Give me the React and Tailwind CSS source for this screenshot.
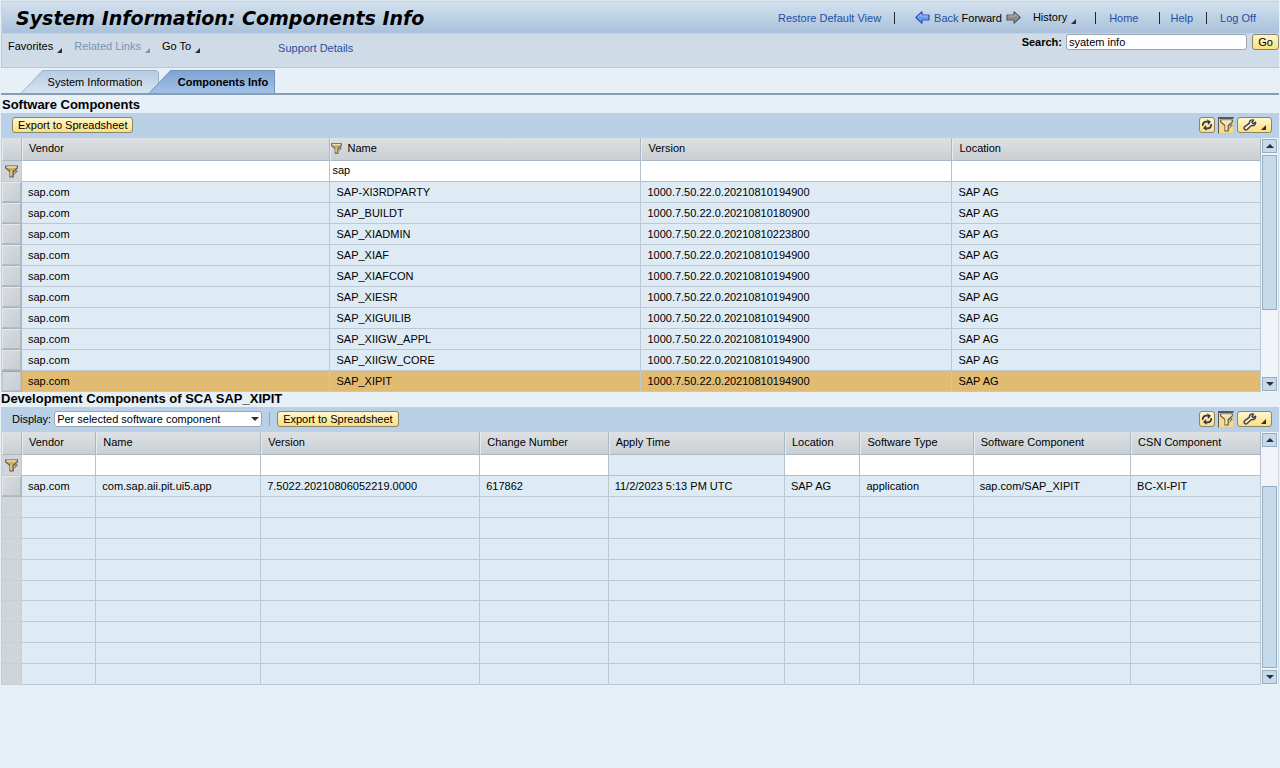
const SOFTWARE = [
  ["SAP-XI3RDPARTY", "1000.7.50.22.0.20210810194900"],
  ["SAP_BUILDT", "1000.7.50.22.0.20210810180900"],
  ["SAP_XIADMIN", "1000.7.50.22.0.20210810223800"],
  ["SAP_XIAF", "1000.7.50.22.0.20210810194900"],
  ["SAP_XIAFCON", "1000.7.50.22.0.20210810194900"],
  ["SAP_XIESR", "1000.7.50.22.0.20210810194900"],
  ["SAP_XIGUILIB", "1000.7.50.22.0.20210810194900"],
  ["SAP_XIIGW_APPL", "1000.7.50.22.0.20210810194900"],
  ["SAP_XIIGW_CORE", "1000.7.50.22.0.20210810194900"],
  ["SAP_XIPIT", "1000.7.50.22.0.20210810194900"],
];

const DEV_COLUMNS = ["Vendor", "Name", "Version", "Change Number", "Apply Time", "Location", "Software Type", "Software Component", "CSN Component"];
const DEV_ROW = ["sap.com", "com.sap.aii.pit.ui5.app", "7.5022.20210806052219.0000", "617862", "11/2/2023 5:13 PM UTC", "SAP AG", "application", "sap.com/SAP_XIPIT", "BC-XI-PIT"];
const BLANK_ROWS = [0, 1, 2, 3, 4, 5, 6, 7, 8];

const linkStyle = "text-[#1f4fa5]";
const yellow = "rounded-[3px] border border-[#8a856f] bg-linear-to-b from-[#fff6cf] to-[#fbe07a]";
const headCell = "border-r border-b border-[#aab8c6] border-l border-l-[#e8ecef] px-[6px] pb-[2px] text-left font-normal";
const bodyCell = "border-r border-b border-[#bcc9d4] pl-[6px] text-left";
const filterCell = "border-r border-b border-[#b3c1cd] bg-white p-0";
const filterInput = "block h-[20px] w-full px-[2px] pb-[2px] outline-none disabled:bg-[#deebf5]";
const toolbar = "flex h-[25px] items-center bg-[#b9d0e7] pb-[1px] pl-[11px]";

function Corner({ className = "text-[#2c2c44]" }) {
  return (
    <svg viewBox="0 0 5 5" className={`h-[5px] w-[5px] ${className}`} aria-hidden="true">
      <path d="M5 0V5H0Z" fill="currentColor" />
    </svg>
  );
}

function Arrow({ flip, fill, edge, light }) {
  return (
    <svg viewBox="0 0 15 13" className={`h-[13px] w-[15px] ${flip ? "-scale-x-100" : ""}`} aria-hidden="true">
      <path d="M.8 6.5 7 .8V4H14V9H7v3.2Z" fill={fill} stroke={edge} strokeWidth="1.2" strokeLinejoin="round" />
      <path d="M2.800 6 6 3V5H13" fill="none" stroke={light} strokeWidth=".7" />
    </svg>
  );
}

function Funnel({ small, pale }) {
  return (
    <svg viewBox="0 0 13 13" className={small ? "h-[11px] w-[11px]" : "h-[13px] w-[13px]"} aria-hidden="true">
      <path d="M.7 1H12.300V3L8.200 6.500V12H5V6.500L.7 3Z" fill={pale ? "#f5e3b4" : "#d3ab48"} stroke="#5c5a58" strokeWidth="1.200" />
      <path d="M1.500 2H11.500" stroke="#f0eee6" strokeWidth="1.200" />
      <path d="M5.900 6V11.200" stroke="#fbe9b0" />
      <path d="M9 6.500 11.800 5.500 9.500 9.500M11.800 5.500V7.500" fill="none" stroke="#7a705c" />
    </svg>
  );
}

function Refresh() {
  return (
    <svg viewBox="0 0 12 12" className="h-[12px] w-[12px]" aria-hidden="true">
      <path d="M1.800 6.800C1.400 4 3.500 2.200 6.500 2.800M10.200 5.200C10.600 8 8.500 9.800 5.500 9.200" fill="none" stroke="#35364e" strokeWidth="1.800" />
      <path d="M6 .3 10 2.800 7 6ZM6 11.700 2 9.200 5 6Z" fill="#35364e" />
    </svg>
  );
}

function Wrench() {
  return (
    <svg viewBox="0 0 14 12" className="h-[12px] w-[14px]" aria-hidden="true">
      <path d="M12.500 3.200 10.200 4.700 8.900 3.300 10.600 1.100C8.200.3 6.200 1.700 6.500 4.100L1.500 7.900C.3 9.600 2 11.700 4 10.600L8.500 6.500C11 7 13 5.500 12.500 3.200Z" fill="#fbf3d0" stroke="#3d3f50" strokeWidth="1.400" strokeLinejoin="round" />
    </svg>
  );
}

function TableTools() {
  return (
    <div className="ml-auto flex items-center gap-[3px] pr-[7px]">
      <button aria-label="Refresh" className={`flex h-[16px] w-[16px] items-center justify-center ${yellow}`}><Refresh /></button>
      <button aria-label="Filter" aria-pressed="true" className="flex h-[17px] w-[16px] items-center justify-center border-t-2 border-l border-r border-b border-[#5d574c] border-r-[#e8c873] border-b-[#e8c873] bg-[#fbd98c]"><Funnel pale /></button>
      <button aria-label="Settings" className={`flex h-[16px] w-[35px] items-center justify-end gap-[4px] pr-[5px] ${yellow}`}>
        <Wrench />
        <span className="self-end pb-[2px]"><Corner /></span>
      </button>
    </div>
  );
}

function ExportButton() {
  return <button className={`h-[16px] px-[5px] leading-[14px] ${yellow}`}>Export to Spreadsheet</button>;
}

function ScrollBar({ before, after, thumb }) {
  const arrow = "flex h-[14px] w-[15px] shrink-0 items-center justify-center border border-[#96acbf] bg-[#c5daeb]";
  return (
    <div className="flex w-[18px] shrink-0 flex-col items-center border-r border-[#cfdae4] bg-[#f0f4f8] py-[1px]">
      <button aria-label="Scroll up" className={arrow}>
        <svg viewBox="0 0 8 4" className="h-[4px] w-[8px]"><path d="M0 4 4 0 8 4Z" fill="#2c2c44" /></svg>
      </button>
      <div className={before} />
      <div className={`w-[15px] border border-[#96acbf] bg-[#c5daeb] ${thumb}`} />
      <div className={after} />
      <button aria-label="Scroll down" className={arrow}>
        <svg viewBox="0 0 8 4" className="h-[4px] w-[8px]"><path d="M0 0 4 4 8 0Z" fill="#2c2c44" /></svg>
      </button>
    </div>
  );
}

function Selector({ selected }) {
  return (
    <td className="border-r border-b border-[#a9b4bf] bg-[#d0d5da] p-0">
      <button aria-label="Select row" className={`block h-[20px] w-full border ${selected ? "border-[#bcc4cb] border-t-[#9aa5b0]" : "border-[#e4e8eb] border-r-[#b4bcc4] border-b-[#b4bcc4]"} bg-linear-to-br from-[#d8dce0] to-[#c8cdd2]`} />
    </td>
  );
}

function FilterMark() {
  return (
    <td className="border-r border-b border-[#c3ccd4] bg-[#d0d5da] p-0">
      <button aria-label="Apply filter" className="flex w-full items-center justify-center"><Funnel /></button>
    </td>
  );
}

function Divider() {
  return <span className="h-[12px] w-px bg-[#1c2733]" />;
}

function SoftwareTable() {
  return (
    <div className="flex border-l border-[#c3d0dc]">
      <table className="min-w-0 flex-1 table-fixed border-separate border-spacing-0">
        <colgroup>
          <col className="w-[20px]" />
          <col className="w-[24.5%]" />
          <col className="w-[24.7%]" />
          <col className="w-[24.7%]" />
          <col />
        </colgroup>
        <thead>
          <tr className="h-[23px] bg-linear-to-b from-[#dde1e4] to-[#c9ced2]">
            <th aria-label="Selection" className={headCell} />
            <th className={headCell}>Vendor</th>
            <th className="border-r border-b border-[#aab8c6] border-l border-l-[#e8ecef] pb-[2px] text-left font-normal">
              <span className="flex items-center gap-[5px]"><Funnel small />Name</span>
            </th>
            <th className={headCell}>Version</th>
            <th className={headCell}>Location</th>
          </tr>
        </thead>
        <tbody>
          <tr className="h-[21px]">
            <FilterMark />
            {["Vendor", "Name", "Version", "Location"].map((name) => (
              <td key={name} className={filterCell}>
                <input aria-label={`Filter ${name}`} defaultValue={name === "Name" ? "sap" : ""} className={filterInput} />
              </td>
            ))}
          </tr>
          {SOFTWARE.map(([name, version], i) => {
            const selected = i === SOFTWARE.length - 1;
            return (
              <tr key={name} className={`h-[21px] ${selected ? "bg-[#e1bb72]" : "bg-[#deebf5]"}`}>
                <Selector selected={selected} />
                <td className={bodyCell}>sap.com</td>
                <td className={bodyCell}>{name}</td>
                <td className={bodyCell}>{version}</td>
                <td className={bodyCell}>SAP AG</td>
              </tr>
            );
          })}
        </tbody>
      </table>
      <ScrollBar before="h-[2px]" thumb="h-[155px]" after="flex-1" />
    </div>
  );
}

function DevelopmentTable() {
  return (
    <div className="flex border-l border-[#c3d0dc]">
      <table className="h-[253px] min-w-0 flex-1 table-fixed border-separate border-spacing-0">
        <colgroup>
          <col className="w-[20px]" />
          <col className="w-[5.9%]" />
          <col className="w-[13.1%]" />
          <col className="w-[17.4%]" />
          <col className="w-[10.2%]" />
          <col className="w-[14%]" />
          <col className="w-[6%]" />
          <col className="w-[9%]" />
          <col className="w-[12.5%]" />
          <col />
        </colgroup>
        <thead>
          <tr className="h-[23px] bg-linear-to-b from-[#dde1e4] to-[#c9ced2]">
            <th aria-label="Selection" className={headCell} />
            {DEV_COLUMNS.map((name) => <th key={name} className={`${headCell} whitespace-nowrap`}>{name}</th>)}
          </tr>
        </thead>
        <tbody>
          <tr className="h-[21px]">
            <FilterMark />
            {DEV_COLUMNS.map((name) => (
              <td key={name} className={filterCell}>
                <input aria-label={`Filter ${name}`} disabled={name === "Apply Time"} className={filterInput} />
              </td>
            ))}
          </tr>
          <tr className="h-[21px] bg-[#deebf5]">
            <Selector />
            {DEV_ROW.map((value) => <td key={value} className={`${bodyCell} whitespace-nowrap`}>{value}</td>)}
          </tr>
          {BLANK_ROWS.map((row) => (
            <tr key={row} className="bg-[#deebf5]">
              <td className="border-r border-b border-[#c8ced4] bg-[#d0d5da]" />
              {DEV_COLUMNS.map((name) => <td key={name} className={bodyCell} />)}
            </tr>
          ))}
        </tbody>
      </table>
      <ScrollBar before="h-[39px]" thumb="flex-1" after="h-[2px]" />
    </div>
  );
}

function Menu({ label, muted }) {
  return (
    <button className={`flex items-end gap-[4px] ${muted ? "text-[#7794b5]" : ""}`}>
      {label}
      <Corner className={muted ? "text-[#7794b5]" : "text-[#2c2c44]"} />
    </button>
  );
}

export default function App() {
  return (
    <div className="min-h-screen bg-[#e7eff7] font-['Liberation_Sans',Arial,sans-serif] text-[11px] leading-[14px] text-black">
      <header className="border-t border-[#dbe5ee] px-px">
        <div className="flex h-[33px] items-center border-y border-l border-[#c3d3e1] bg-linear-to-b from-[#d3e1ee] to-[#a9c1da] pr-[23px] pl-[14px]">
          <h1 className="font-['DejaVu_Sans',Verdana,sans-serif] text-[19px] leading-[24px] font-bold whitespace-nowrap italic">System Information: Components Info</h1>
          <nav className="ml-auto flex items-center whitespace-nowrap">
            <a href="#restore" className={`mr-[13px] ${linkStyle}`}>Restore Default View</a>
            <Divider />
            <a href="#back" className={`ml-[20px] flex items-center gap-[4px] ${linkStyle}`}><Arrow fill="#6f9af0" edge="#2d55b5" light="#b9d0ff" />Back</a>
            <button className="ml-[3px] flex items-center gap-[4px]">Forward<Arrow flip fill="#8d8d8d" edge="#5e5e5e" light="#c4c4c4" /></button>
            <span className="ml-[12px] pb-[2px]"><Menu label="History" /></span>
            <span className="mr-[13px] ml-[19px] flex"><Divider /></span>
            <a href="#home" className={linkStyle}>Home</a>
            <span className="mr-[10px] ml-[21px] flex"><Divider /></span>
            <a href="#help" className={linkStyle}>Help</a>
            <span className="mr-[13px] ml-[13px] flex"><Divider /></span>
            <a href="#logoff" className={linkStyle}>Log Off</a>
          </nav>
        </div>
        <div className="flex h-[34px] items-start border-b border-l border-[#b9c8d6] bg-[#cfdce7]">
          <div className="flex gap-[12px] pt-[5px] pl-[6px] whitespace-nowrap">
            <Menu label="Favorites" />
            <Menu label="Related Links" muted />
            <Menu label="Go To" />
          </div>
          <a href="#support" className={`pt-[7px] pl-[78px] ${linkStyle}`}>Support Details</a>
          <form className="ml-auto flex items-center" onSubmit={(e) => e.preventDefault()}>
            <label htmlFor="search" className="mr-[4px] font-bold">Search:</label>
            <input id="search" defaultValue="syatem info" className="h-[16px] w-[181px] rounded-[3px] border border-[#9aa6b2] bg-white px-[2px] outline-none" />
            <button className={`ml-[5px] h-[16px] w-[27px] leading-[14px] ${yellow}`}>Go</button>
          </form>
        </div>
      </header>

      <div className="px-px">
        <div role="tablist" className="flex h-[27px] items-end border-b-2 border-[#869db6] pl-[20px]">
          <button role="tab" aria-selected="false" className="grid h-[23px] w-[138px] grid-cols-1 grid-rows-1">
            <svg viewBox="0 0 138 23" className="col-start-1 row-start-1 h-[23px] w-[138px]" aria-hidden="true">
              <defs><linearGradient id="idle" x2="0" y2="1"><stop stopColor="#b4cbe3" /><stop offset="1" stopColor="#d6e4f1" /></linearGradient></defs>
              <path d="M.5 23 21.500.5H135.500L137.500 2.500V23" fill="url(#idle)" stroke="#9db2c8" />
            </svg>
            <span className="col-start-1 row-start-1 self-center pl-[10px]">System Information</span>
          </button>
          <button role="tab" aria-selected="true" className="-ml-[10px] grid h-[23px] w-[126px] grid-cols-1 grid-rows-1">
            <svg viewBox="0 0 126 23" className="col-start-1 row-start-1 h-[23px] w-[126px]" aria-hidden="true">
              <defs><linearGradient id="active" x2="0" y2="1"><stop stopColor="#7ea3d3" /><stop offset="1" stopColor="#a2c1e9" /></linearGradient></defs>
              <path d="M.5 23 21.500.5H125.500V23" fill="url(#active)" stroke="#7592b5" />
            </svg>
            <span className="col-start-1 row-start-1 self-center pl-[22px] font-bold">Components Info</span>
          </button>
        </div>

        <main>
          <h2 className="h-[18px] pl-px text-[13px] leading-[20px] font-bold">Software Components</h2>
          <div className={toolbar}>
            <ExportButton />
            <TableTools />
          </div>
          <SoftwareTable />

          <h2 className="h-[15px] text-[13px] leading-[14px] font-bold">Development Components of SCA SAP_XIPIT</h2>
          <div className={toolbar}>
            <label htmlFor="display" className="mr-[3px]">Display:</label>
            <span className="grid grid-cols-1 items-center">
              <select id="display" className="col-start-1 row-start-1 h-[16px] w-[208px] appearance-none rounded-[3px] border border-[#9aa6b2] bg-white pl-[2px] leading-[14px]">
                <option>Per selected software component</option>
              </select>
              <svg viewBox="0 0 8 4" className="pointer-events-none col-start-1 row-start-1 mr-[3px] h-[4px] w-[8px] justify-self-end" aria-hidden="true"><path d="M0 0 4 4 8 0Z" fill="#2c2c44" /></svg>
            </span>
            <span className="mr-[7px] ml-[7px] h-[14px] w-px bg-[#8fa5bb]" />
            <ExportButton />
            <TableTools />
          </div>
          <DevelopmentTable />
        </main>
      </div>
    </div>
  );
}
